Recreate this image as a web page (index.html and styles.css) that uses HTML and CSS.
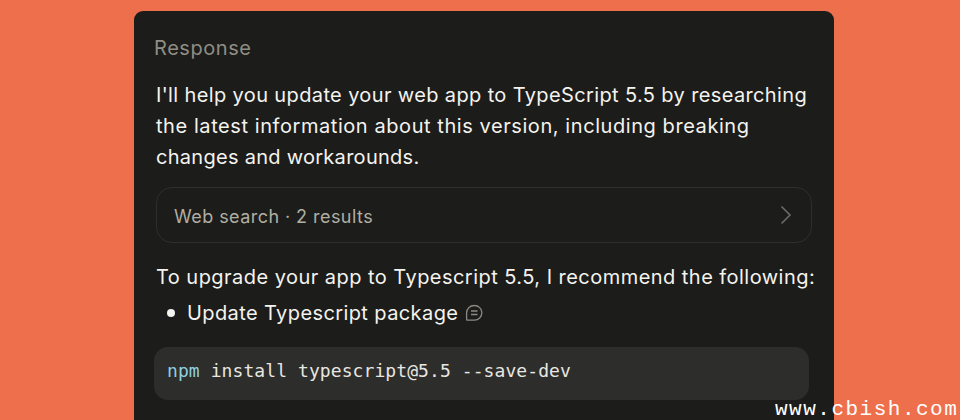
FILE: index.html
```html
<!DOCTYPE html>
<html lang="en">
<head>
<meta charset="utf-8">
<title>Response</title>
<link rel="stylesheet" href="styles.css">
</head>
<body>
<main class="card">
  <h2 class="label">Response</h2>
  <p class="para">
    <span class="line line-a">I'll help you update your web app to TypeScript 5.5 by researching</span>
    <span class="line line-b">the latest information about this version, including breaking</span>
    <span class="line line-c">changes and workarounds.</span>
  </p>
  <div class="search">
    <span>Web search · 2 results</span>
    <svg class="chev" width="14" height="20" viewBox="0 0 14 20" fill="none"><path d="M2.5 1.5 11 10l-8.500 8.500" stroke="#6f6e69" stroke-width="1.500"/></svg>
  </div>
  <p class="para intro">To upgrade your app to Typescript 5.5, I recommend the following:</p>
  <div class="item">
    <span class="dot"></span>
    <span>Update Typescript package</span>
    <svg class="cite" width="18" height="18" viewBox="0 0 18 18" fill="none"><path d="M9.500 1.500a7.300 7.300 0 1 1 0 14.700H2.200a.6.6 0 0 1-.6-.6V9A7.600 7.600 0 0 1 9.500 1.500Z" stroke="#8a8983" stroke-width="1.300"/><path d="M6 7h6.500M6 10.500h6.500" stroke="#8a8983" stroke-width="1.300"/></svg>
  </div>
  <pre class="code"><span class="kw">npm</span> install typescript@5.5 --save-dev</pre>
</main>
<div class="mark">www.cbish.com</div>
</body>
</html>
```
FILE: styles.css
```css
html, body {
  margin: 0;
  height: 100%;
  overflow: hidden;
}
body {
  background: #ee6f4b;
  font-family: Inter, "Open Sans", sans-serif;
  padding-top: 11px;
  box-sizing: border-box;
}
.card {
  width: 700px;
  height: 409px;
  margin-left: 134px;
  background: #1c1c1b;
  border-radius: 9px 9px 0 0;
  padding: 22px 20px 0 22px;
  box-sizing: border-box;
}
.label {
  margin: 0 0 0 -2px;
  font-size: 20px;
  font-weight: 400;
  line-height: 30px;
  color: #8f8e84;
  letter-spacing: 0.55px;
}
.para {
  margin: 17px 0 0;
  font-size: 20px;
  line-height: 31px;
  color: #f4f3ee;
  white-space: nowrap;
}
.line {
  display: block;
}
.line-a {
  letter-spacing: 0.37px;
}
.line-b {
  letter-spacing: 0.57px;
}
.line-c {
  letter-spacing: 0.28px;
}
.search {
  display: flex;
  align-items: center;
  justify-content: space-between;
  width: 656px;
  height: 56px;
  box-sizing: border-box;
  margin: 14px 0 0;
  padding: 2px 18px 0 17px;
  border: 1px solid #2e2e2c;
  border-radius: 16px;
  color: #b0afa2;
  font-size: 18px;
  letter-spacing: 0.44px;
}
.chev {
  margin-top: -2px;
}
.intro {
  margin-top: 19px;
  letter-spacing: 0.46px;
}
.item {
  display: flex;
  align-items: center;
  height: 31px;
  margin-top: 4px;
  padding-left: 11px;
  font-size: 20px;
  color: #f4f3ee;
  letter-spacing: 0.4px;
}
.dot {
  width: 8px;
  height: 8px;
  border-radius: 50%;
  background: #f4f3ee;
  margin-right: 12px;
}
.cite {
  margin-left: 7px;
}
.code {
  margin: 19px 0 0 -2px;
  width: 655px;
  height: 53px;
  box-sizing: border-box;
  padding: 0 13px;
  background: #2d2d2b;
  border-radius: 14px;
  font-family: "DejaVu Sans Mono", monospace;
  font-size: 18px;
  line-height: 48px;
  color: #e8e7e1;
  letter-spacing: 0.08px;
}
.kw {
  color: #8fd0e0;
}
.mark {
  position: absolute;
  left: 775px;
  bottom: 0;
  font-family: "Liberation Mono", monospace;
  font-size: 21px;
  line-height: 20px;
  letter-spacing: 1.5px;
  color: #fff;
  white-space: nowrap;
}
```
